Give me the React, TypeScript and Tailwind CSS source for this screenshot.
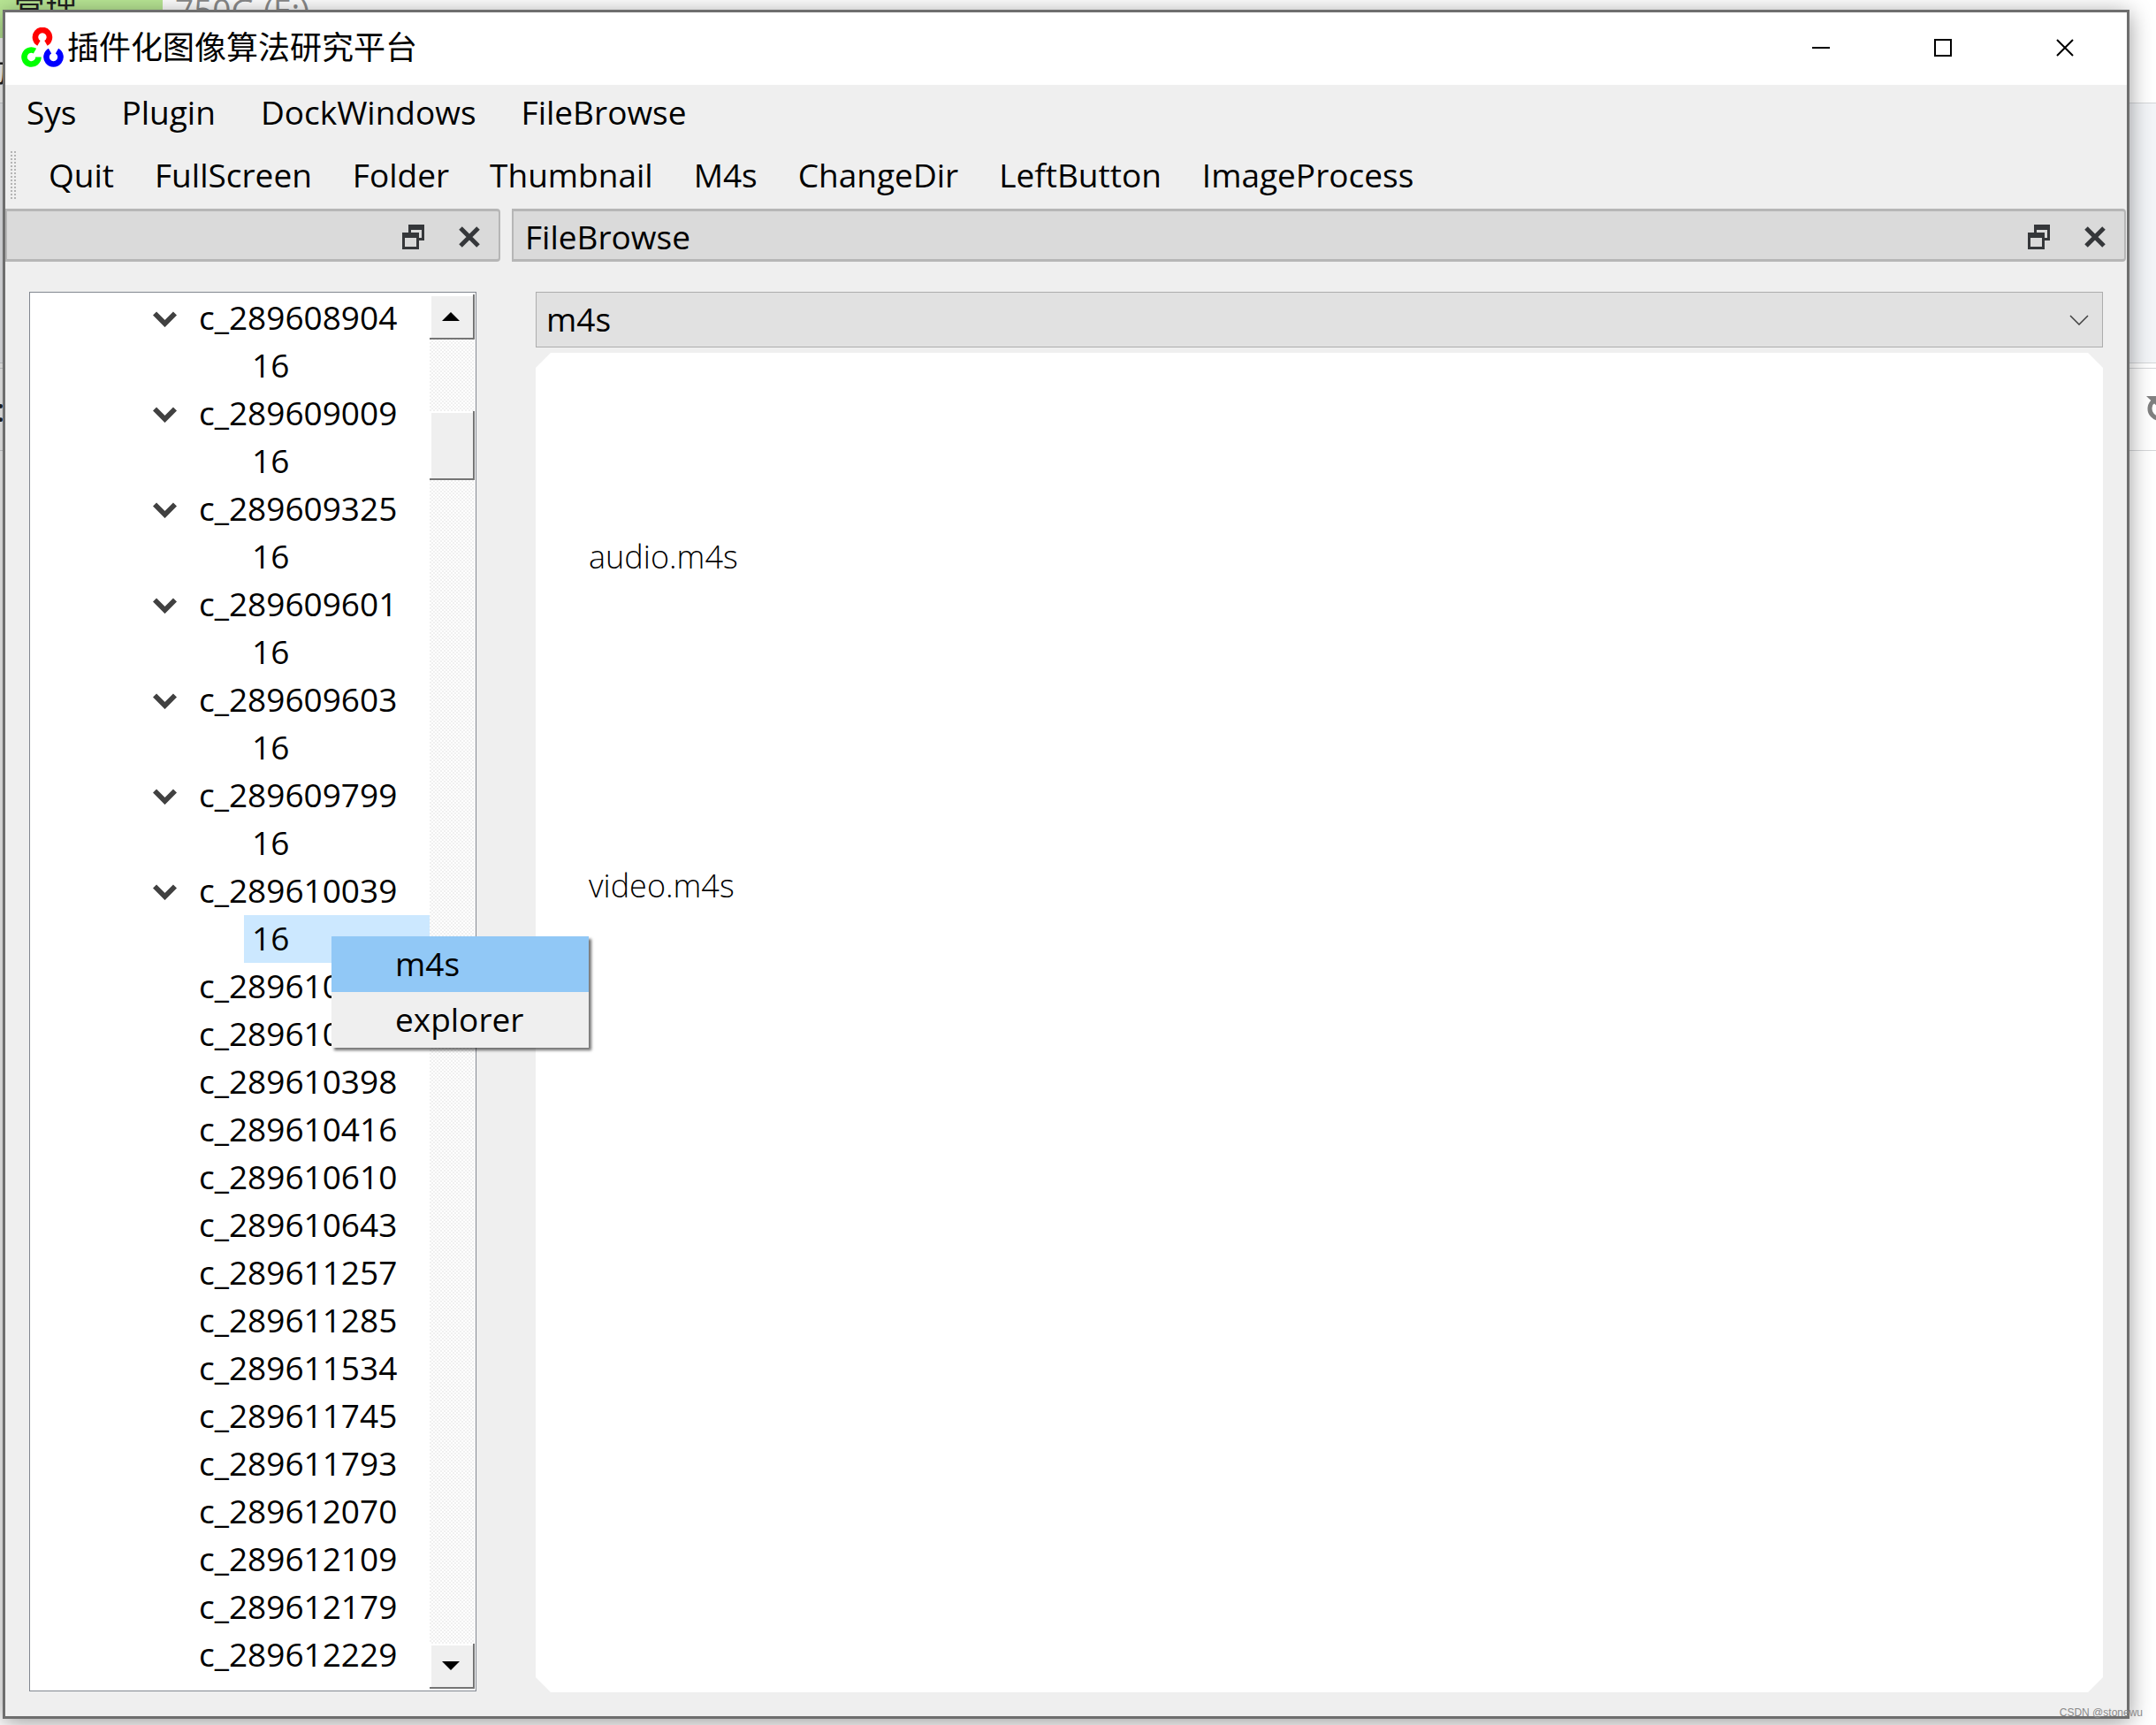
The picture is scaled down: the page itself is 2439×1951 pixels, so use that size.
import type { ReactNode } from "react";

type TreeRow = { label: string; level: 1 | 2; open?: boolean; selected?: boolean };

const expanded = ["c_289608904", "c_289609009", "c_289609325", "c_289609601", "c_289609603", "c_289609799", "c_289610039"];
const collapsed = [
  "c_289610100", "c_289610211", "c_289610398", "c_289610416", "c_289610610", "c_289610643", "c_289611257", "c_289611285",
  "c_289611534", "c_289611745", "c_289611793", "c_289612070", "c_289612109", "c_289612179", "c_289612229",
];

const rows: TreeRow[] = [
  ...expanded.flatMap((label, i): TreeRow[] => [
    { label, level: 1, open: true },
    { label: "16", level: 2, selected: i === expanded.length - 1 },
  ]),
  ...collapsed.map((label): TreeRow => ({ label, level: 1 })),
];

const menus = ["Sys", "Plugin", "DockWindows", "FileBrowse"];
const tools = ["Quit", "FullScreen", "Folder", "Thumbnail", "M4s", "ChangeDir", "LeftButton", "ImageProcess"];

function Logo() {
  return (
    <svg className="h-[46px] w-12 shrink-0" viewBox="0 0 48 46" fill="none" strokeWidth="6.6" aria-hidden="true">
      <path stroke="#ff0000" d="M19.95 17.93a8 8 0 1 1 8 0" />
      <path stroke="#00ff00" d="M15.5 26.57a8 8 0 1 0 4 6.93" />
      <path stroke="#0000ff" d="M32.5 26.57a8 8 0 1 0 8 0" />
    </svg>
  );
}

function FloatIcon() {
  return (
    <svg className="h-7 w-[25px]" viewBox="0 0 25 28" aria-hidden="true">
      <path fill="#35373a" fillRule="evenodd" d="M7 0h18v18h-6v-3h3V6H10v3H7zM0 9h19v19H0zM3 15v10h13V15z" />
    </svg>
  );
}

function CrossIcon() {
  return (
    <svg className="h-6 w-6" viewBox="0 0 24 24" aria-hidden="true">
      <path d="M2 2l20 20M22 2L2 22" stroke="#35373a" strokeWidth="5" />
    </svg>
  );
}

function DockTitle({ title }: { title?: string }) {
  return (
    <header className="flex h-[60px] items-center rounded-r-sm border-x-2 border-y-3 border-[#b6b6b6] bg-[#dadada] pt-1 pr-[21px] pl-[13px]">
      <div className="flex-1">{title && <h2>{title}</h2>}</div>
      <button type="button" aria-label="Float" className="mr-[39px]">
        <FloatIcon />
      </button>
      <button type="button" aria-label="Close panel">
        <CrossIcon />
      </button>
    </header>
  );
}

function CaptionButton({ label, children }: { label: string; children: ReactNode }) {
  return (
    <button type="button" aria-label={label} className="flex h-full w-[138px] items-center justify-center">
      <svg className="h-5 w-5" viewBox="0 0 20 20" fill="none" stroke="#000" strokeWidth="2" aria-hidden="true">
        {children}
      </svg>
    </button>
  );
}

function ContextMenu() {
  return (
    <div role="menu" className="absolute top-6 left-[99px] z-10 flex w-[291px] flex-col bg-[#efefef] shadow-[3px_3px_3px_rgba(0,0,0,0.55)]">
      <button type="button" role="menuitem" className="h-[63px] bg-[#91c8f6] pb-0.5 pl-18 text-left">
        m4s
      </button>
      <button type="button" role="menuitem" className="h-[63px] pb-0.5 pl-18 text-left">
        explorer
      </button>
    </div>
  );
}

function Tree() {
  return (
    <ul role="tree" aria-label="Folders" className="flex-1">
      {rows.map((row, i) =>
        row.level === 1 ? (
          <li key={i} role="treeitem" aria-expanded={row.open} className="flex h-[54px] items-center pb-0.5">
            <span className="flex w-[189px] justify-end pt-1 pr-[25px]">
              {row.open && (
                <svg className="h-[18px] w-[27px]" viewBox="0 0 27 18" fill="none" aria-hidden="true">
                  <path d="M2 2.5l11.5 11.5L25 2.5" stroke="#414141" strokeWidth="5.8" />
                </svg>
              )}
            </span>
            {row.label}
          </li>
        ) : (
          <li key={i} role="treeitem" aria-selected={row.selected} className="flex h-[54px] pl-[240px]">
            <span className={row.selected ? "relative flex flex-1 items-center bg-[#cce8ff] pb-0.5 pl-[9px]" : "flex flex-1 items-center pb-0.5 pl-[9px]"}>
              {row.label}
              {row.selected && <ContextMenu />}
            </span>
          </li>
        ),
      )}
    </ul>
  );
}

function Arrow({ down }: { down?: boolean }) {
  return (
    <svg className="h-2.5 w-5" viewBox="0 0 20 10" aria-hidden="true">
      <path d={down ? "M0 0h20L10 10z" : "M0 10h20L10 0z"} />
    </svg>
  );
}

function ScrollBar() {
  return (
    <div className="flex w-[51px] flex-col bg-[repeating-conic-gradient(#f0f0f0_0_25%,#fff_0_50%)] bg-size-[4px_4px]">
      <button
        type="button"
        aria-label="Scroll up"
        className="flex h-[51px] items-center justify-center border-r-2 border-b-2 border-[#757575] bg-[#efefef] pr-0.5 shadow-[inset_2px_2px_0_#fff]"
      >
        <Arrow />
      </button>
      <div className="flex-1 pt-[81px]">
        <div className="h-[78px] border-r-2 border-b-2 border-[#757575] bg-[#efefef] shadow-[inset_2px_2px_0_#fff]" />
      </div>
      <button
        type="button"
        aria-label="Scroll down"
        className="flex h-[51px] items-center justify-center border-r-2 border-b-2 border-[#757575] bg-[#efefef] pr-0.5 shadow-[inset_2px_2px_0_#fff]"
      >
        <Arrow down />
      </button>
    </div>
  );
}

function Backdrop() {
  return (
    <div className="absolute inset-0 -z-10 flex flex-col bg-white text-[36px] leading-[54px]" aria-hidden="true">
      <div className="relative flex h-[116px] items-start">
        <div className="h-[43px] w-[184px] overflow-hidden bg-[#b9e795] pl-[15px]">
          <div className="-mt-5 text-[#222]">管理</div>
        </div>
        <div className="-mt-4 pl-3.5 text-[37px] text-[#8a8a8a]">750G (E:)</div>
        <span className="absolute top-[53px] -left-7 text-[#222]">动</span>
      </div>
      <div className="h-[295px] border-y border-[#d5d7d9] bg-[#f3f5f8]" />
      <div className="relative mt-[5px] flex h-[94px] items-center border-y border-[#d5d7d9]">
        <span className="absolute top-5 -left-1 text-[#222]">:</span>
        <svg className="-mr-5 ml-auto h-8 w-8" viewBox="0 0 32 32" fill="none" aria-hidden="true">
          <path d="M10 6a11 11 0 1 0 12 0" stroke="#808080" strokeWidth="5" />
          <path d="M1 1h13v12z" fill="#808080" />
        </svg>
      </div>
    </div>
  );
}

export default function App() {
  return (
    <div className="relative isolate flex min-h-screen flex-col overflow-hidden pt-[11px] pr-[30px] pb-[7px] pl-[3px] font-['Open_Sans','Noto_Sans_CJK_SC',sans-serif] text-[37px] leading-[54px] text-black">
      <Backdrop />
      <main className="flex flex-1 flex-col border-3 border-[#6e6e6e] bg-[#efefef] shadow-[0_4px_24px_rgba(0,0,0,0.4)]">
        <header className="flex h-[82px] items-center bg-white pr-px pb-0.5 pl-[18px]">
          <Logo />
          <h1 className="flex-1 pl-1 text-[36px]">插件化图像算法研究平台</h1>
          <CaptionButton label="Minimize">
            <path d="M0 10h20" />
          </CaptionButton>
          <CaptionButton label="Maximize">
            <path d="M1 1h18v18H1z" />
          </CaptionButton>
          <CaptionButton label="Close">
            <path d="M1 1l18 18M19 1L1 19" />
          </CaptionButton>
        </header>

        <nav aria-label="Menu bar" className="flex h-16 items-center gap-[51px] pb-0.5 pl-6">
          {menus.map((m) => (
            <button type="button" key={m}>{m}</button>
          ))}
        </nav>

        <div role="toolbar" aria-label="Tools" className="flex h-[76px] items-center">
          <span className="ml-[5px] h-[57px] w-2 bg-[radial-gradient(#b4b4b4_1px,transparent_1px)] bg-size-[4px_4px]" />
          <div className="flex gap-[46px] pl-9">
            {tools.map((t) => (
              <button type="button" key={t}>{t}</button>
            ))}
          </div>
        </div>

        <div className="flex flex-1 gap-[13px] pr-px">
          <section aria-label="Folders" className="flex w-[560px] flex-col">
            <DockTitle />
            <div className="mt-[34px] mr-[27px] mb-7 ml-[27px] flex flex-1 border border-[#828790] bg-white py-0.5 pr-px pl-0.5">
              <Tree />
              <ScrollBar />
            </div>
          </section>

          <section className="flex min-w-0 flex-1 flex-col">
            <DockTitle title="FileBrowse" />
            <div className="mt-[34px] mr-[26px] mb-[27px] ml-[27px] flex flex-1 flex-col gap-1.5">
              <div className="relative">
                <select
                  aria-label="Mode"
                  defaultValue="m4s"
                  className="block h-[63px] w-full appearance-none border border-[#adadad] bg-[#e1e1e1] pb-0.5 pl-[11px]"
                >
                  <option>m4s</option>
                </select>
                <svg className="pointer-events-none absolute top-[26px] right-4 h-3 w-[22px]" viewBox="0 0 22 12" fill="none" aria-hidden="true">
                  <path d="M1 1l10 10L21 1" stroke="#404040" strokeWidth="1.5" />
                </svg>
              </div>
              <ul className="flex-1 bg-white pt-[204px] pl-[60px] text-[36px] font-light [clip-path:polygon(17px_0,calc(100%-17px)_0,100%_17px,100%_calc(100%-17px),calc(100%-17px)_100%,17px_100%,0_calc(100%-17px),0_17px)]">
                <li className="h-[372px]">audio.m4s</li>
                <li>video.m4s</li>
              </ul>
            </div>
          </section>
        </div>
      </main>
      <small className="absolute right-[15px] bottom-1.5 font-['Liberation_Sans',sans-serif] text-[12px] leading-4 text-[#8a8a8a]">CSDN @stonewu</small>
    </div>
  );
}
